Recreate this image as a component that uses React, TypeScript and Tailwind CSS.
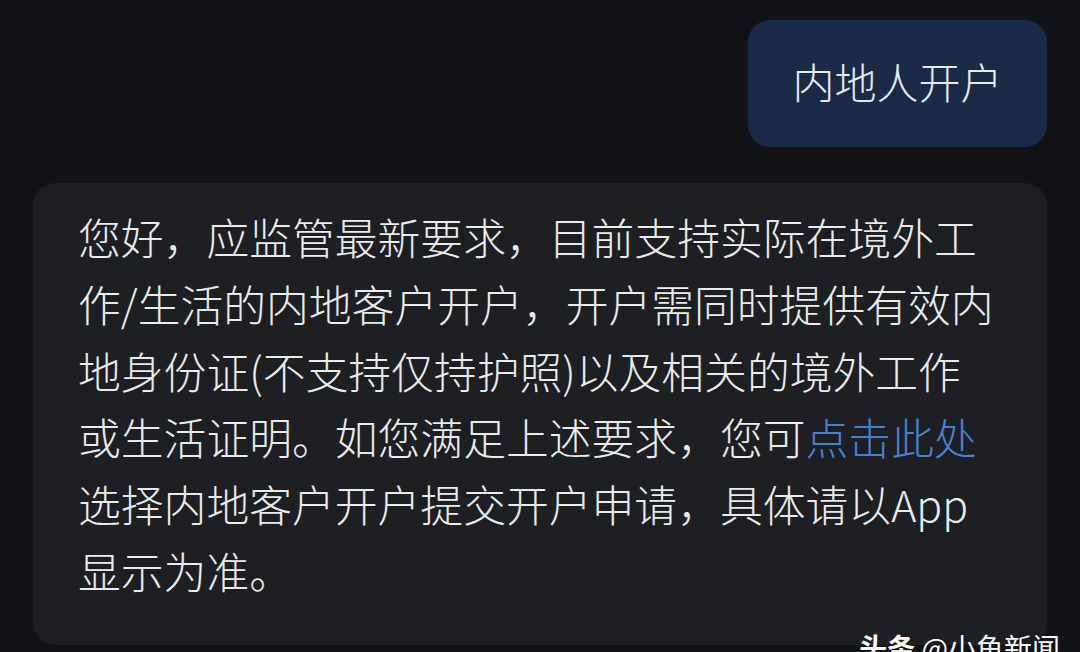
import React from "react";

const font = {
  fontFamily: '"Noto Sans CJK SC", "Noto Sans", sans-serif',
};

const lines: React.ReactNode[] = [
  "您好，应监管最新要求，目前支持实际在境外工",
  "作/生活的内地客户开户，开户需同时提供有效内",
  "地身份证(不支持仅持护照)以及相关的境外工作",
  <>
    或生活证明。如您满足上述要求，您可
    <span className="text-[#4a80d2]">点击此处</span>
  </>,
  "选择内地客户开户提交开户申请，具体请以App",
  "显示为准。",
];

const App = () => {
  return (
    <div
      className="relative h-[652px] w-[1080px] overflow-hidden bg-[#131417]"
      style={font}
    >
      <div className="flex flex-col pl-[33px] pr-[33px] pt-[20px]">
        <div className="flex justify-end">
          <div className="flex h-[127px] w-[299px] items-center justify-center rounded-[22px] bg-[#1b2a47] pb-[6px] text-[42px] font-light text-[#e8ebf1]">
            内地人开户
          </div>
        </div>
        <div className="mt-[36px] h-[462px] rounded-[22px] bg-[#1e1f22] pl-[45px] pt-[20px]">
          {lines.map((line, i) => (
            <div
              key={i}
              className="whitespace-nowrap text-[42.8px] font-light leading-[66.8px] text-[#e9ebed]"
            >
              {line}
            </div>
          ))}
        </div>
      </div>
      <div className="absolute bottom-[-16px] right-[20px] whitespace-nowrap text-[28px] text-white">
        <span className="font-bold">头条</span> @小鱼新闻
      </div>
    </div>
  );
};

export default App;
